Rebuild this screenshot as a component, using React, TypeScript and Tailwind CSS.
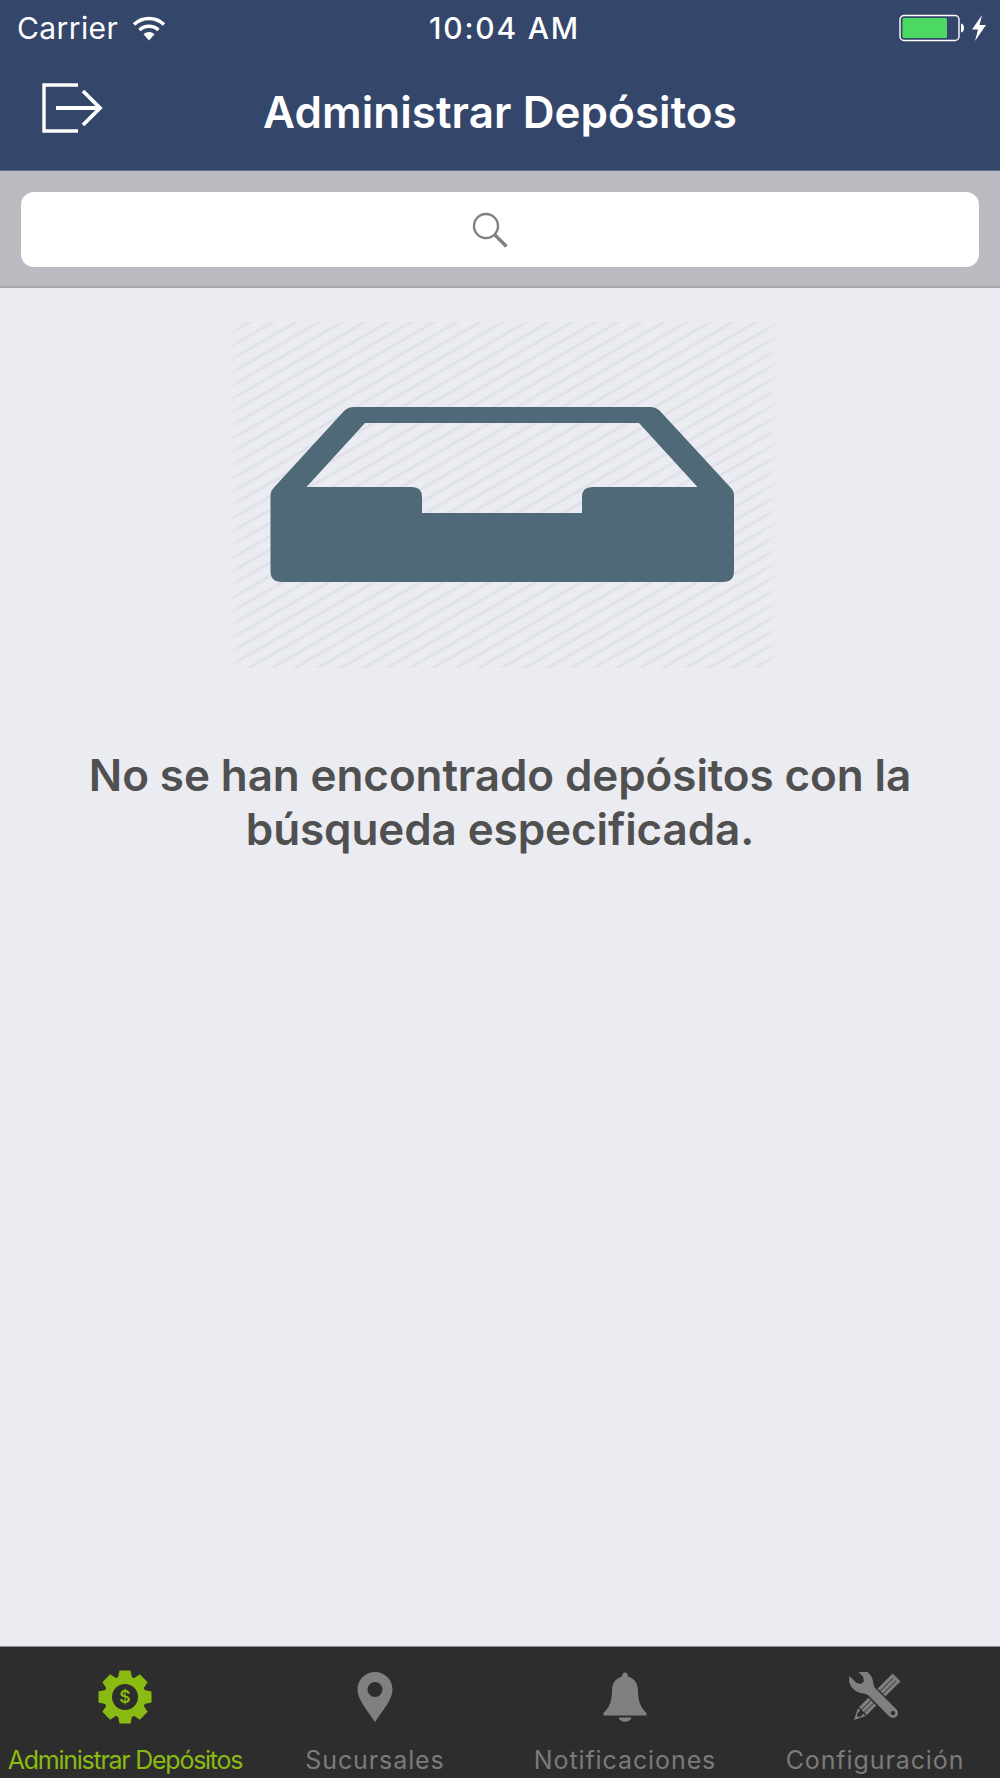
const font = "font-['Inter','Liberation_Sans',sans-serif]";

function Wifi() {
  return (
    <svg width="34" height="26" viewBox="0 0 34 26" className="ml-[14px]" fill="none">
      <path d="M2 9.500C10.500 1.500 23.500 1.500 32 9.500" stroke="#fff" strokeWidth="3.6" />
      <path d="M7.500 15C13 10 21 10 26.500 15" stroke="#fff" strokeWidth="3.6" />
      <path d="M11.500 19.200C14.800 16.400 19.200 16.400 22.500 19.200L17 25.500Z" fill="#fff" />
    </svg>
  );
}

function Battery() {
  return (
    <div className="flex items-center">
      <svg width="66" height="28" viewBox="0 0 66 28" fill="none">
        <rect x="1" y="1.500" width="59" height="25" rx="4" stroke="#fff" strokeWidth="1.4" />
        <rect x="3.500" y="4" width="44.500" height="20" rx="1.500" fill="#4cd964" />
        <path d="M62 9.500C64 9.800 65 11.500 65 14C65 16.500 64 18.200 62 18.500Z" fill="#fff" />
      </svg>
      <svg width="16" height="26" viewBox="0 0 16 26" className="ml-[6px]">
        <path d="M11 0L1 14.500H7L4 26L15 10H8.500Z" fill="#fff" />
      </svg>
    </div>
  );
}

function Exit() {
  return (
    <svg width="62" height="50" viewBox="0 0 62 50" fill="none" stroke="#fff" strokeWidth="3.4">
      <path d="M36 2H2V48H36" />
      <path d="M14 25H58" strokeWidth="3.8" />
      <path d="M41 8L58 25L41 42" strokeWidth="3.8" />
    </svg>
  );
}

function Search() {
  return (
    <svg width="36" height="36" viewBox="0 0 36 36" fill="none" stroke="#818185">
      <circle cx="14" cy="14" r="12" strokeWidth="2.4" />
      <path d="M23 23L34.500 34.500" strokeWidth="3.4" />
    </svg>
  );
}

function Tray() {
  return (
    <svg width="552" height="346" viewBox="226 322 552 346" className="ml-[4px]">
      <defs>
        <pattern id="st" width="24" height="11.500" patternUnits="userSpaceOnUse" patternTransform="rotate(-30)">
          <rect width="24" height="2.800" fill="#e0e2e9" />
        </pattern>
        <linearGradient id="fx" x1="0" x2="1" y1="0" y2="0">
          <stop offset="0" stopColor="#000" />
          <stop offset="0.025" stopColor="#fff" />
          <stop offset="0.975" stopColor="#fff" />
          <stop offset="1" stopColor="#000" />
        </linearGradient>
        <mask id="fade">
          <rect x="226" y="322" width="552" height="346" fill="url(#fx)" />
        </mask>
        <filter id="soft" x="0" y="0" width="1" height="1">
          <feGaussianBlur stdDeviation="0.6" />
        </filter>
      </defs>
      <g mask="url(#fade)">
        <rect x="226" y="322" width="552" height="346" fill="url(#st)" filter="url(#soft)" />
      </g>
      <path
        fillRule="evenodd"
        fill="#4f6978"
        d="M354 407H650Q656 407 660 411L731 488Q734 491 734 496V571Q734 582 723 582H281.500Q270.500 582 270.500 571V496Q270.500 491 273.500 488L344 411Q348 407 354 407ZM365 423L306.500 487H412Q422 487 422 497V513H582V497Q582 487 592 487H697.500L639 423Z"
      />
    </svg>
  );
}

function Gear() {
  const teeth = [0, 45, 90, 135, 180, 225, 270, 315];
  return (
    <svg width="54" height="54" viewBox="-27 -27 54 54">
      {teeth.map((a) => (
        <path key={a} d="M-5.500 -26.500H5.500L7.500 -17H-7.500Z" fill="#8abb12" transform={`rotate(${a})`} />
      ))}
      <circle r="21" fill="#8abb12" />
      <circle r="13" fill="#2d2d2d" />
      <text x="0" y="6.300" textAnchor="middle" fontSize="17.500" fontWeight="600" fill="#8abb12" fontFamily="Inter, sans-serif">
        $
      </text>
    </svg>
  );
}

function Pin() {
  return (
    <svg width="36" height="52" viewBox="0 0 36 52">
      <path
        fillRule="evenodd"
        fill="#808080"
        d="M18 1C8.500 1 .5 8.500 .5 18.500C.5 29 11 40 18 51C25 40 35.500 29 35.500 18.500C35.500 8.500 27.500 1 18 1ZM18 11A7.500 7.500 0 1 1 18 26A7.500 7.500 0 1 1 18 11Z"
      />
    </svg>
  );
}

function Bell() {
  return (
    <svg width="44" height="50" viewBox="0 0 44 50">
      <path
        fill="#808080"
        d="M19 4.500C19 2 20.500 .5 22 .5C23.500 .5 25 2 25 4.500C32 6.500 35 12 35 19C35 28 37 35 43.500 41V43.500H.5V41C7 35 9 28 9 19C9 12 12 6.500 19 4.500Z"
      />
      <path fill="#808080" d="M15.500 45.500H28.500C27.500 48.500 25 49.800 22 49.800C19 49.800 16.500 48.500 15.500 45.500Z" />
    </svg>
  );
}

function Tools() {
  return (
    <svg width="52" height="50" viewBox="0 0 52 50">
      <g transform="translate(5 48) rotate(45)" fill="#808080">
        <path d="M0 0L-5.500 -11H-2.300V-7L0 -4.500L2.300 -7V-11H5.500Z" />
        <rect x="-5.500" y="-60" width="3.200" height="47.500" />
        <rect x="-1.600" y="-60" width="3.200" height="47.500" />
        <rect x="2.300" y="-60" width="3.200" height="47.500" />
        <rect x="-5.500" y="-60" width="11" height="2.400" />
      </g>
      <g transform="translate(44 41) rotate(-45)">
        <path
          fill="#808080"
          stroke="#2d2d2d"
          strokeWidth="3"
          paintOrder="stroke"
          fillRule="evenodd"
          d="M-5 0V-30C-5 -34 -11 -37 -11 -45C-11 -51 -8 -55 -4.500 -57V-47L-2 -43H2L4.500 -47V-57C8 -55 11 -51 11 -45C11 -37 5 -34 5 -30V0A5 5 0 0 1 -5 0ZM0 -2.200A2.200 2.200 0 1 0 0 2.200A2.200 2.200 0 1 0 0 -2.200Z"
        />
      </g>
    </svg>
  );
}

function Tab({ icon, label, active }: { icon: React.ReactNode; label: string; active?: boolean }) {
  return (
    <div className="flex w-1/4 flex-col items-center">
      <div className="flex h-[54px] items-center justify-center">{icon}</div>
      <div
        className={
          active
            ? "mt-[20px] whitespace-nowrap text-[25px] leading-[32px] tracking-[-1.26px] text-[#8abb12]"
            : "mt-[20px] whitespace-nowrap text-[25px] leading-[32px] tracking-[0.9px] text-[#7b7b7b]"
        }
      >
        {label}
      </div>
    </div>
  );
}

export default function App() {
  return (
    <div className={`flex h-[1778px] w-[1000px] flex-col overflow-hidden bg-[#ebebf2] ${font}`}>
      <header className="h-[171px] shrink-0 border-b border-[#5d6c8a] bg-[#34466a] text-white">
        <div className="flex h-[56px] items-center justify-between pl-[17px] pr-[13px]">
          <div className="flex w-[300px] items-center text-[30px] leading-none tracking-[0.4px]">
            Carrier
            <Wifi />
          </div>
          <div className="ml-[5px] text-[30px] font-medium leading-none tracking-[1.8px]">10:04 AM</div>
          <div className="flex w-[300px] justify-end">
            <Battery />
          </div>
        </div>
        <div className="relative flex h-[114px] items-center justify-center">
          <div className="absolute left-[42px] top-[27px]">
            <Exit />
          </div>
          <h1 className="-mt-[2px] text-[44px] font-semibold leading-none tracking-[0.05px]">Administrar Depósitos</h1>
        </div>
      </header>
      <div className="h-[117px] shrink-0 border-b-[2px] border-[#a9a9ad] bg-[#bbbac0] px-[21px] pt-[21px]">
        <div className="flex h-[75px] items-center justify-center rounded-[13px] bg-white pr-[20px]">
          <Search />
        </div>
      </div>
      <main className="flex flex-1 flex-col items-center pt-[34px]">
        <Tray />
        <p className="mt-[80px] w-[860px] text-center text-[44px] font-semibold leading-[54px] tracking-[-0.1px] text-[#505050]">
          No se han encontrado depósitos con la búsqueda especificada.
        </p>
      </main>
      <nav className="flex h-[132px] shrink-0 border-t border-[#8b8b8f] bg-[#2d2d2d] pt-[23px]">
        <Tab icon={<Gear />} label="Administrar Depósitos" active />
        <Tab icon={<Pin />} label="Sucursales" />
        <Tab icon={<Bell />} label="Notificaciones" />
        <Tab icon={<Tools />} label="Configuración" />
      </nav>
    </div>
  );
}
